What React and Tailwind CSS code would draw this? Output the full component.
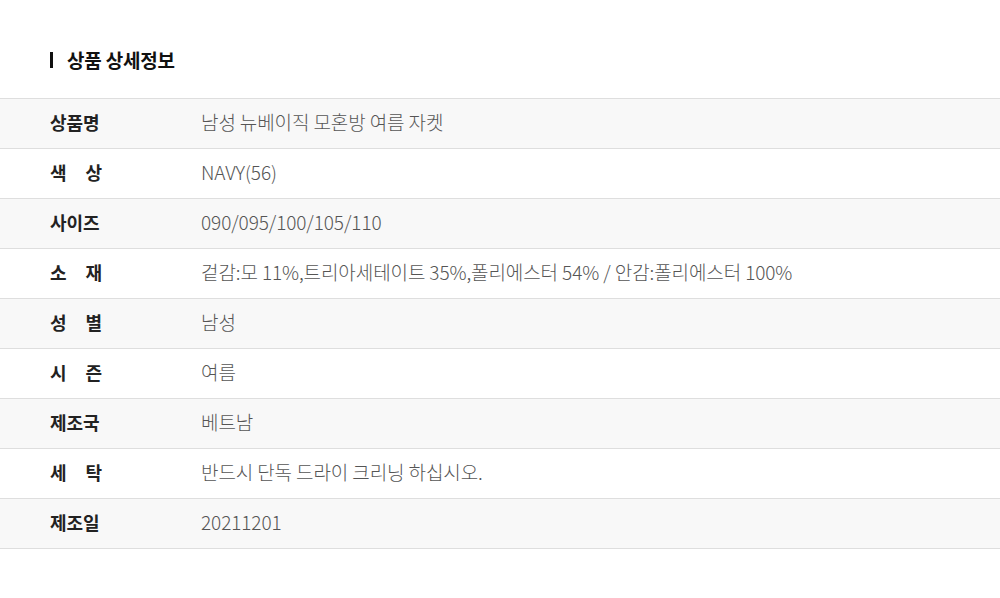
import React from 'react';

const rows = [
  { label: ['상품명'], value: '남성 뉴베이직 모혼방 여름 자켓' },
  { label: ['색', '상'], value: 'NAVY(56)' },
  { label: ['사이즈'], value: '090/095/100/105/110' },
  { label: ['소', '재'], value: '겉감:모 11%,트리아세테이트 35%,폴리에스터 54% / 안감:폴리에스터 100%' },
  { label: ['성', '별'], value: '남성' },
  { label: ['시', '즌'], value: '여름' },
  { label: ['제조국'], value: '베트남' },
  { label: ['세', '탁'], value: '반드시 단독 드라이 크리닝 하십시오.' },
  { label: ['제조일'], value: '20211201' },
];

const font = { fontFamily: '"Noto Sans CJK KR", "Noto Sans", sans-serif' };

export default function App() {
  return (
    <div className="w-[1000px] h-[598px] bg-white" style={font}>
      {/* Title */}
      <div className="flex items-center h-[98px] pl-[50px] pt-[22px]">
        <span className="w-[3px] h-[16px] bg-[#111] mr-[14px]"></span>
        <h2 className="text-[19px] font-bold text-[#111] tracking-[-0.2px]">상품 상세정보</h2>
      </div>

      {/* Table */}
      <div className="border-t border-[#dedede]">
        {rows.map((row, i) => (
          <div
            key={i}
            className={`flex items-center h-[50px] pb-[2px] border-b border-[#dedede] ${i % 2 === 0 ? 'bg-[#f8f8f8]' : 'bg-white'}`}
          >
            <div className="w-[201px] pl-[50px] shrink-0">
              <div className="w-[52px] flex justify-between text-[18px] font-bold text-[#222]">
                {row.label.map((t, j) => (
                  <span key={j}>{t}</span>
                ))}
              </div>
            </div>
            <div className="text-[19px] font-light text-[#555] tracking-[-0.1px]">{row.value}</div>
          </div>
        ))}
      </div>
    </div>
  );
}
